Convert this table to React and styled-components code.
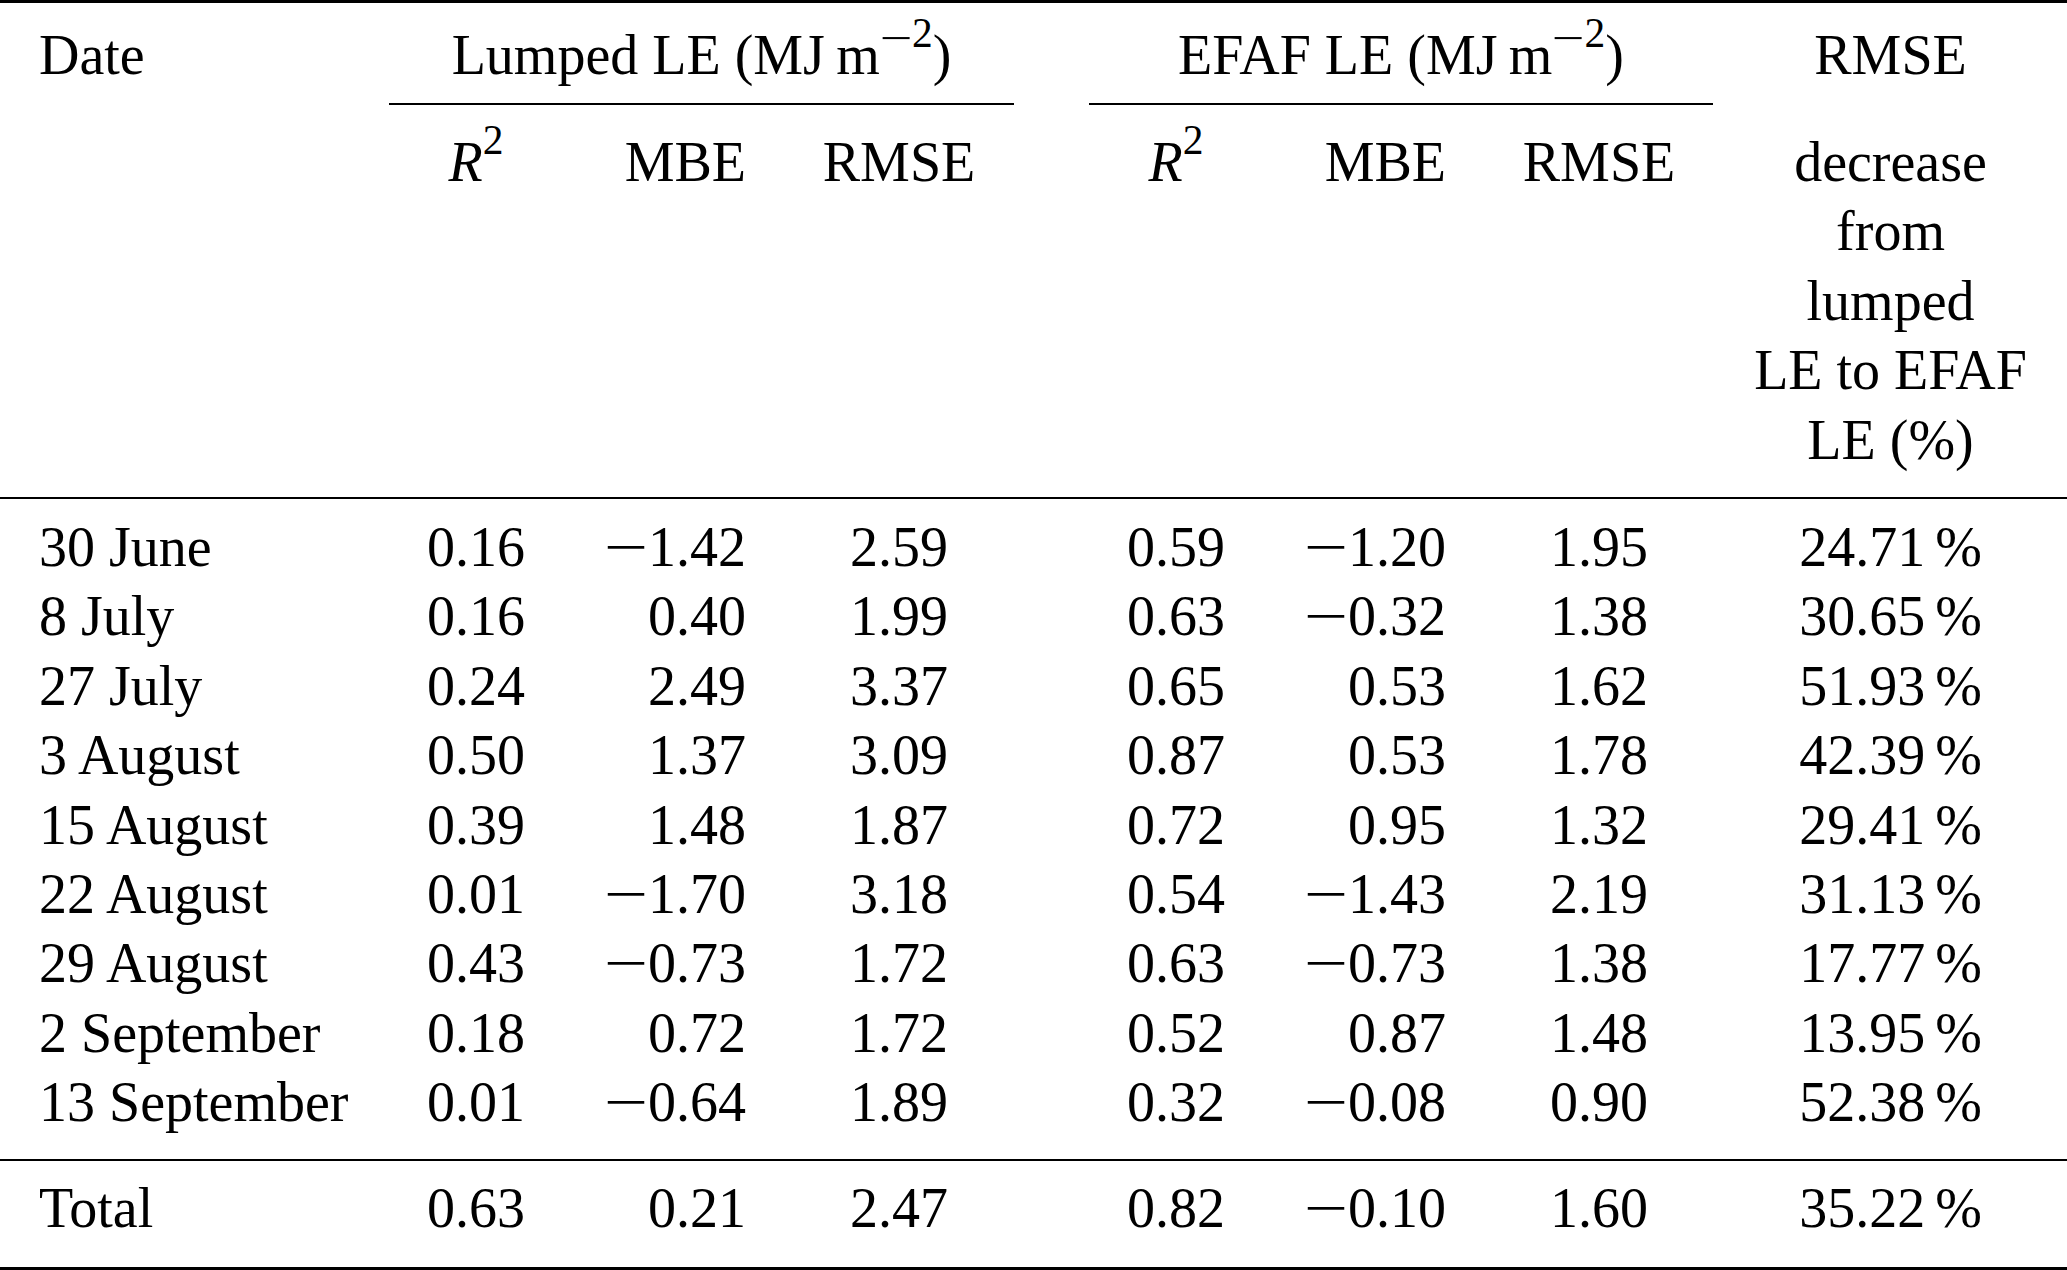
import React from 'react';
import styled, { createGlobalStyle } from 'styled-components';

const GlobalStyle = createGlobalStyle`
  html, body {
    margin: 0;
    padding: 0;
    background: #fff;
  }
  body {
    font-family: "Liberation Serif", "Times New Roman", serif;
    color: #000;
  }
`;

const columns = [
  { width: 389, align: 'left', pl: 39 },
  { width: 174, align: 'center' },
  { width: 197, align: 'right', pr: 14 },
  { width: 329, align: 'center', pr: 51 },
  { width: 174, align: 'center' },
  { width: 197, align: 'right', pr: 14 },
  { width: 278, align: 'center' },
  { width: 329, align: 'center', pr: 24 },
];

const rows = [
  ['30 June', '0.16', '-1.42', '2.59', '0.59', '-1.20', '1.95', '24.71'],
  ['8 July', '0.16', '0.40', '1.99', '0.63', '-0.32', '1.38', '30.65'],
  ['27 July', '0.24', '2.49', '3.37', '0.65', '0.53', '1.62', '51.93'],
  ['3 August', '0.50', '1.37', '3.09', '0.87', '0.53', '1.78', '42.39'],
  ['15 August', '0.39', '1.48', '1.87', '0.72', '0.95', '1.32', '29.41'],
  ['22 August', '0.01', '-1.70', '3.18', '0.54', '-1.43', '2.19', '31.13'],
  ['29 August', '0.43', '-0.73', '1.72', '0.63', '-0.73', '1.38', '17.77'],
  ['2 September', '0.18', '0.72', '1.72', '0.52', '0.87', '1.48', '13.95'],
  ['13 September', '0.01', '-0.64', '1.89', '0.32', '-0.08', '0.90', '52.38'],
];

const total = ['Total', '0.63', '0.21', '2.47', '0.82', '-0.10', '1.60', '35.22'];

const Table = styled.table`
  width: 2067px;
  table-layout: fixed;
  border-collapse: separate;
  border-spacing: 0;
  font-size: 56px;
  line-height: 69.4px;
`;

const Cell = styled.td`
  padding: 0;
  text-align: ${p => p.$align || 'center'};
  padding-left: ${p => p.$pl || 0}px;
  padding-right: ${p => p.$pr || 0}px;
  vertical-align: top;
  white-space: nowrap;
`;

const Line = styled.div`
  height: 69.4px;
  line-height: 69.4px;
`;

const Head = styled.thead`
  tr:first-child td {
    border-top: 3px solid #000;
    padding-top: 18px;
  }
  tr:last-child td {
    padding-top: 23px;
    padding-bottom: 22px;
    border-bottom: 2px solid #000;
  }
`;

const Body = styled.tbody`
  tr:first-child td {
    padding-top: 14px;
  }
  tr:last-child td {
    padding-bottom: 21.4px;
  }
`;

const Foot = styled.tfoot`
  td {
    border-top: 2px solid #000;
    border-bottom: 3px solid #000;
    padding-top: 13px;
    padding-bottom: 23.6px;
  }
`;

const GroupRule = styled.div`
  text-align: center;
  padding-bottom: 12.6px;
  border-bottom: 2px solid #000;
  margin-left: ${p => p.$ml || 0}px;
  margin-right: ${p => p.$mr || 0}px;
`;

// TeX-style math minus: wider than the text glyph
const Minus = styled.span`
  display: inline-block;
  width: 0.78em;
  text-align: center;
  transform: scaleX(1.4);
  ${p => p.$sup && 'line-height: 0.6; vertical-align: -0.12em;'}
`;

const Sup = styled.sup`
  font-size: 0.74em;
  line-height: 0;
  vertical-align: 0.66em;
`;

const Italic = styled.i`
  font-style: italic;
`;

const Pct = styled.span`
  margin-left: 10px;
`;

const Num = ({ value }) =>
  value.startsWith('-') ? (
    <>
      <Minus>−</Minus>
      {value.slice(1)}
    </>
  ) : (
    value
  );

const R2 = () => (
  <>
    <Italic>R</Italic>
    <Sup>2</Sup>
  </>
);

const Unit = () => (
  <>
    (MJ{'\u2009'}m
    <Sup>
      <Minus $sup>−</Minus>2
    </Sup>
    )
  </>
);

const DataRow = ({ cells }) => (
  <tr>
    {cells.map((v, i) => {
      const c = columns[i];
      return (
        <Cell key={i} $align={c.align} $pl={c.pl} $pr={c.pr}>
          <Line>
            {i === 0 ? v : <Num value={v} />}
            {i === 7 && <Pct>%</Pct>}
          </Line>
        </Cell>
      );
    })}
  </tr>
);

const subHeads = [<R2 />, 'MBE', 'RMSE', <R2 />, 'MBE', 'RMSE'];

export default function App() {
  return (
    <>
      <GlobalStyle />
      <Table>
        <colgroup>
          {columns.map((c, i) => (
            <col key={i} style={{ width: c.width }} />
          ))}
        </colgroup>
        <Head>
          <tr>
            <Cell $align="left" $pl={39}>Date</Cell>
            <Cell colSpan={3}>
              <GroupRule $mr={75}>
                Lumped LE <Unit />
              </GroupRule>
            </Cell>
            <Cell colSpan={3}>
              <GroupRule $mr={25}>
                EFAF LE <Unit />
              </GroupRule>
            </Cell>
            <Cell $pr={24}>RMSE</Cell>
          </tr>
          <tr>
            <Cell />
            {subHeads.map((h, i) => {
              const c = columns[i + 1];
              return (
                <Cell key={i} $align={c.align} $pl={c.pl} $pr={c.pr}>
                  {h}
                </Cell>
              );
            })}
            <Cell $pr={24}>
              decrease
              <br />
              from
              <br />
              lumped
              <br />
              LE to EFAF
              <br />
              LE (%)
            </Cell>
          </tr>
        </Head>
        <Body>
          {rows.map((r, i) => (
            <DataRow key={i} cells={r} />
          ))}
        </Body>
        <Foot>
          <DataRow cells={total} />
        </Foot>
      </Table>
    </>
  );
}
